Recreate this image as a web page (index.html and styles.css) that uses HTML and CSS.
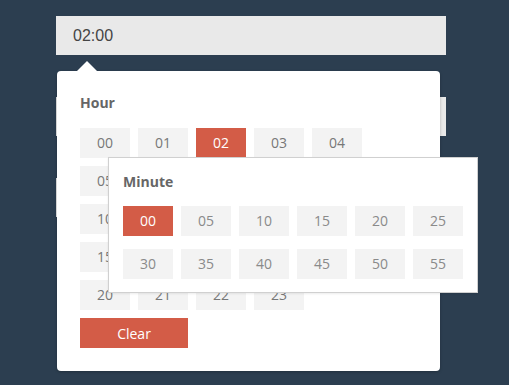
FILE: index.html
```html
<!DOCTYPE html>
<html>
<head>
<meta charset="utf-8">
<link rel="stylesheet" href="styles.css">
</head>
<body>
<div class="page">
  <div class="field">02:00</div>
  <div class="field"></div>
  <div class="field"></div>

  <div class="picker">
    <div class="arrow"></div>
    <div class="label">Hour</div>
    <div class="grid hours">
      <div class="cell">00</div><div class="cell">01</div><div class="cell active">02</div><div class="cell">03</div><div class="cell">04</div>
      <div class="cell">05</div><div class="cell">06</div><div class="cell">07</div><div class="cell">08</div><div class="cell">09</div>
      <div class="cell">10</div><div class="cell">11</div><div class="cell">12</div><div class="cell">13</div><div class="cell">14</div>
      <div class="cell">15</div><div class="cell">16</div><div class="cell">17</div><div class="cell">18</div><div class="cell">19</div>
      <div class="cell">20</div><div class="cell">21</div><div class="cell">22</div><div class="cell">23</div>
    </div>
    <button class="clear">Clear</button>

    <div class="minutes">
      <div class="label">Minute</div>
      <div class="grid mins">
        <div class="cell active">00</div><div class="cell">05</div><div class="cell">10</div><div class="cell">15</div><div class="cell">20</div><div class="cell">25</div>
        <div class="cell">30</div><div class="cell">35</div><div class="cell">40</div><div class="cell">45</div><div class="cell">50</div><div class="cell">55</div>
      </div>
    </div>
  </div>
</div>
</body>
</html>
```

FILE: styles.css
```css
html, body {
  margin: 0;
  padding: 0;
  background: #2c3e50;
  height: 100%;
  overflow: hidden;
}
.page {
  position: relative;
  padding: 16px 0 0 56px;
  display: flex;
  flex-direction: column;
  gap: 42px;
}
.field {
  width: 373px;
  height: 39px;
  background: #e9e9e9;
  padding-left: 17px;
  font-family: "Liberation Sans", Arial, sans-serif;
  font-size: 16px;
  line-height: 39px;
  color: #444;
  box-sizing: content-box;
}
.picker {
  position: absolute;
  left: 57px;
  top: 71px;
  width: 383px;
  height: 300px;
  box-sizing: border-box;
  background: #fff;
  border-radius: 4px;
  padding: 22px 23px;
  box-shadow: 0 1px 3px rgba(0,0,0,0.25);
  font-family: "Open Sans", "Noto Sans", sans-serif;
}
.arrow {
  position: absolute;
  left: 20px;
  top: -10px;
  width: 0;
  height: 0;
  border-left: 10px solid transparent;
  border-right: 10px solid transparent;
  border-bottom: 10px solid #fff;
}
.label {
  font-weight: bold;
  font-size: 14px;
  line-height: 20px;
  color: #666;
}
.grid {
  display: grid;
  grid-template-columns: repeat(5, 50px);
  grid-auto-rows: 30px;
  column-gap: 8px;
}
.hours {
  margin-top: 15px;
  row-gap: 8px;
}
.cell {
  background: #f3f3f3;
  color: #777;
  font-size: 14px;
  line-height: 30px;
  text-align: center;
}
.cell.active {
  background: #d35c47;
  color: #fff;
}
.clear {
  display: block;
  margin-top: 8px;
  width: 108px;
  height: 30px;
  border: 0;
  padding: 0;
  background: #d35c47;
  color: #fff;
  font-family: "Open Sans", "Noto Sans", sans-serif;
  font-size: 14px;
}
.minutes {
  position: absolute;
  left: 51px;
  top: 86px;
  width: 370px;
  height: 136px;
  box-sizing: border-box;
  background: #fff;
  border: 1px solid #d0d0d0;
  padding: 14px;
  box-shadow: 0 1px 2px rgba(0,0,0,0.08);
}
.mins {
  grid-template-columns: repeat(6, 50px);
  margin-top: 14px;
  row-gap: 13px;
}
.mins .cell {
  color: #8a8a8a;
}
.mins .cell.active {
  color: #fff;
}
```
